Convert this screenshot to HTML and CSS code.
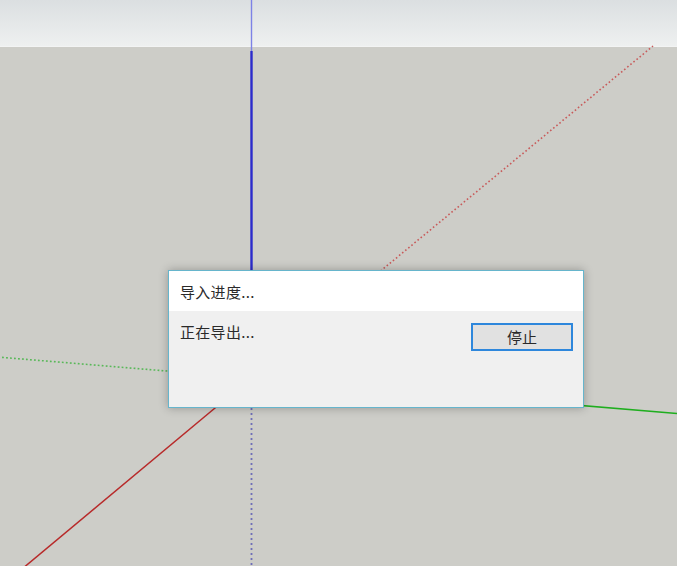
FILE: index.html
```html
<!DOCTYPE html>
<html lang="zh">
<head>
<meta charset="utf-8">
<title>导入进度</title>
<link rel="stylesheet" href="styles.css">
</head>
<body>
<div class="viewport">
  <svg class="scene" width="677" height="566" viewBox="0 0 677 566">
    <defs>
      <linearGradient id="sky" x1="0" y1="0" x2="0" y2="1">
        <stop offset="0" stop-color="#dbdfe1"/>
        <stop offset="1" stop-color="#eef0f0"/>
      </linearGradient>
    </defs>
    <rect x="0" y="0" width="677" height="46" fill="url(#sky)"/>
    <rect x="0" y="46" width="677" height="1" fill="#f3f4f4"/>
    <rect x="0" y="47" width="677" height="519" fill="#cdcdc8"/>
    <!-- blue axis above horizon -->
    <line x1="251.5" y1="0" x2="251.5" y2="51" stroke="#7d82e6" stroke-width="1.4"/>
    <!-- blue axis solid -->
    <line x1="251.5" y1="51" x2="251.5" y2="378" stroke="#2b2bcc" stroke-width="2.4"/>
    <!-- blue axis dotted (negative) -->
    <line x1="251.5" y1="378" x2="251.5" y2="566" stroke="#6f6fb8" stroke-width="1.8" stroke-dasharray="2 3"/>
    <!-- red dotted -->
    <line x1="251" y1="378" x2="653" y2="46" stroke="#c85a5a" stroke-width="1.6" stroke-dasharray="1.6 2.4"/>
    <!-- red solid -->
    <line x1="251" y1="378" x2="22" y2="569" stroke="#b82a2a" stroke-width="1.5"/>
    <!-- green dotted -->
    <line x1="251" y1="378" x2="0" y2="357.2" stroke="#58b858" stroke-width="1.6" stroke-dasharray="1.8 2.2"/>
    <!-- green solid -->
    <line x1="251" y1="378" x2="677" y2="413.5" stroke="#1fae1f" stroke-width="1.6"/>
  </svg>

  <div class="dialog">
    <div class="dialog-title">导入进度...</div>
    <div class="dialog-body">
      <span class="status">正在导出...</span>
      <button class="btn" type="button">停止</button>
    </div>
  </div>
</div>
</body>
</html>
```
FILE: styles.css
```css
html, body {
  margin: 0;
  padding: 0;
  width: 677px;
  height: 566px;
  overflow: hidden;
  background: #cdcdc8;
  font-family: "Noto Sans CJK SC", "Noto Sans", "Liberation Sans", sans-serif;
}

.viewport {
  position: relative;
  width: 677px;
  height: 566px;
}

.scene {
  display: block;
}

.dialog {
  position: absolute;
  left: 168px;
  top: 270px;
  width: 414px;
  height: 136px;
  border: 1px solid #66b5cc;
  box-shadow: 0 0 9px rgba(0, 0, 0, 0.28);
  display: flex;
  flex-direction: column;
  background: #f0f0f0;
}

.dialog-title {
  height: 40px;
  background: #ffffff;
  display: flex;
  align-items: center;
  padding-left: 11px;
  font-size: 15px;
  color: #2a2a2a;
  letter-spacing: 0.3px;
}

.dialog-body {
  flex: 1;
  display: flex;
  justify-content: space-between;
  align-items: flex-start;
  padding: 10px 10px 0 11px;
}

.status {
  font-size: 15px;
  color: #2a2a2a;
  line-height: 22px;
  letter-spacing: 0.3px;
}

.btn {
  width: 102px;
  height: 28px;
  margin-top: 2px;
  border: 2px solid #2e87dc;
  background: #e1e1e1;
  font-family: inherit;
  font-size: 15px;
  color: #2a2a2a;
  padding: 0;
  line-height: 22px;
}
```
